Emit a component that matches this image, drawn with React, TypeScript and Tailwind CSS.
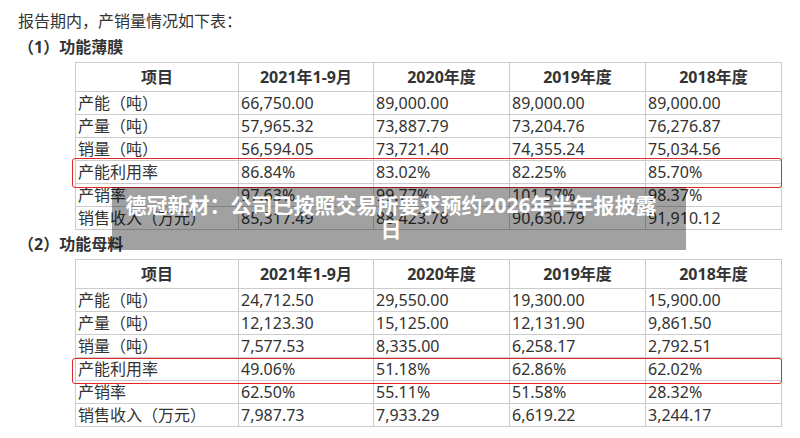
import React from "react";

type Row = [string, string, string, string, string];

const headers = ["项目", "2021年1-9月", "2020年度", "2019年度", "2018年度"];

const table1: Row[] = [
  ["产能（吨）", "66,750.00", "89,000.00", "89,000.00", "89,000.00"],
  ["产量（吨）", "57,965.32", "73,887.79", "73,204.76", "76,276.87"],
  ["销量（吨）", "56,594.05", "73,721.40", "74,355.24", "75,034.56"],
  ["产能利用率", "86.84%", "83.02%", "82.25%", "85.70%"],
  ["产销率", "97.63%", "99.77%", "101.57%", "98.37%"],
  ["销售收入（万元）", "85,317.49", "88,423.78", "90,630.79", "91,910.12"],
];

const table2: Row[] = [
  ["产能（吨）", "24,712.50", "29,550.00", "19,300.00", "15,900.00"],
  ["产量（吨）", "12,123.30", "15,125.00", "12,131.90", "9,861.50"],
  ["销量（吨）", "7,577.53", "8,335.00", "6,258.17", "2,792.51"],
  ["产能利用率", "49.06%", "51.18%", "62.86%", "62.02%"],
  ["产销率", "62.50%", "55.11%", "51.58%", "28.32%"],
  ["销售收入（万元）", "7,987.73", "7,933.29", "6,619.22", "3,244.17"],
];

function DataTable({ rows, markTop, markHeight }: { rows: Row[]; markTop: string; markHeight: string }) {
  return (
    <div className="relative ml-[75px] w-[707px]">
      <div className="grid grid-cols-[163px_135px_136px_136px_136px] border-l border-t border-[#cccccc]">
        {headers.map((h) => (
          <div
            key={h}
            className="h-[29px] border-r border-b border-[#cccccc] flex items-center justify-center font-bold text-[16px] text-[#333333]"
          >
            {h}
          </div>
        ))}
        {rows.map((r, i) =>
          r.map((c, j) => (
            <div
              key={i + "-" + j}
              className="h-[23px] border-r border-b border-[#cccccc] flex items-center pl-[2px] text-[16px] text-[#333333] whitespace-nowrap overflow-hidden"
            >
              {c}
            </div>
          ))
        )}
      </div>
      <div className={"absolute left-[-3px] w-[710px] border border-[#e32626] rounded-[3px] pointer-events-none " + markTop + " " + markHeight} />
    </div>
  );
}

export default function App() {
  return (
    <div className="relative w-[800px] h-[438px] bg-white overflow-hidden font-['Noto_Sans','Noto_Sans_CJK_SC',sans-serif] text-[#333333]">
      <div className="pt-[9px]">
        <div className="pl-[18px] text-[16px] leading-[24px]">报告期内，产销量情况如下表：</div>
        <div className="pl-[18px] text-[16px] font-bold leading-[29px]">（1）功能薄膜</div>
        <DataTable rows={table1} markTop="top-[96px]" markHeight="h-[30px]" />
        <div className="pl-[18px] text-[16px] font-bold leading-[29px]">（2）功能母料</div>
        <DataTable rows={table2} markTop="top-[99px]" markHeight="h-[26px]" />
      </div>
      <div className="absolute left-[112px] top-[187px] w-[574px] h-[63px] bg-[rgba(0,0,0,0.37)] pl-[10px] pr-[26px] pt-[6px] text-center text-white font-bold text-[21px] leading-[24px]">
        德冠新材：公司已按照交易所要求预约2026年半年报披露日
      </div>
    </div>
  );
}
